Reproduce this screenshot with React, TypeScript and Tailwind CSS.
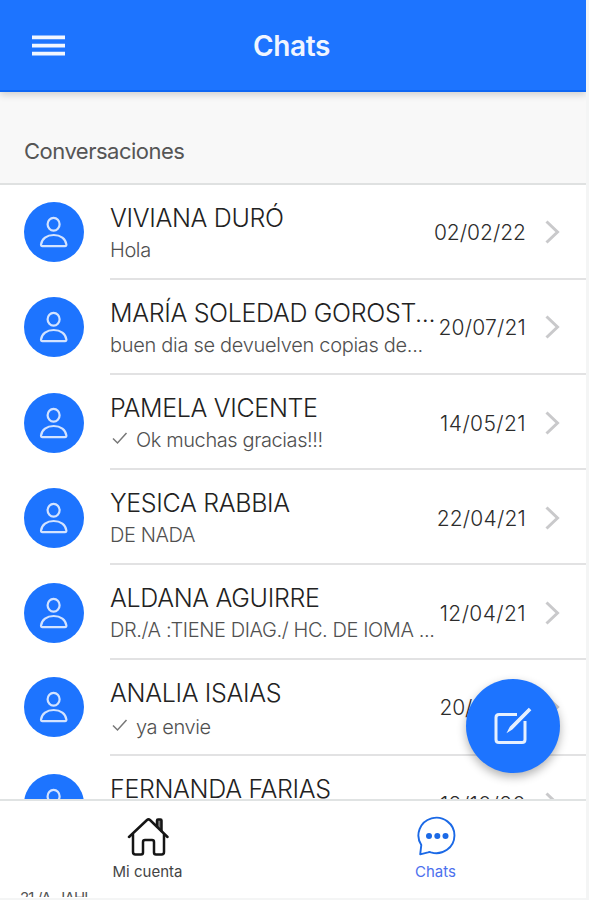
import React from "react";

type Row = { name: string; msg: string; date: string; sent?: boolean; h: string; low?: boolean; msgCls?: string; dateCls?: string };

const rows: Row[] = [
  { name: "VIVIANA DURÓ", msg: "Hola", date: "02/02/22", h: "h-[95px]", dateCls: "tracking-normal" },
  { name: "MARÍA SOLEDAD GOROST...", msg: "buen dia se devuelven copias de...", date: "20/07/21", h: "h-[95px]", msgCls: "tracking-[-0.3px]" },
  { name: "PAMELA VICENTE", msg: "Ok muchas gracias!!!", date: "14/05/21", sent: true, h: "h-[95px]", low: true, dateCls: "tracking-[0.4px]" },
  { name: "YESICA RABBIA", msg: "DE NADA", date: "22/04/21", h: "h-[95px]", low: true },
  { name: "ALDANA AGUIRRE", msg: "DR./A :TIENE DIAG./ HC. DE IOMA ...", date: "12/04/21", h: "h-[95px]", low: true, dateCls: "tracking-[0.4px]" },
  { name: "ANALIA ISAIAS", msg: "ya envie", date: "20/03/21", sent: true, h: "h-[96px]", msgCls: "pt-[2px] tracking-[-0.4px]", dateCls: "tracking-[-0.1px]" },
  { name: "FERNANDA FARIAS", msg: "", date: "12/10/20", h: "h-[95px]", low: true, dateCls: "tracking-[0.4px]" },
];

function Avatar() {
  return (
    <div className="mt-[17px] ml-6 h-[60px] w-[60px] shrink-0 rounded-full bg-[#1d74ff]">
      <svg viewBox="0 0 60 60" className="h-full w-full" fill="none" stroke="#d3e3ff" strokeWidth="2.2">
        <ellipse cx="29.6" cy="22.2" rx="6" ry="6.4" />
        <path d="M17 42.700c.6-6 5.900-9.700 12.700-9.700s12.100 3.700 12.700 9.700q.1 1.400-1.400 1.400H18.400q-1.500 0-1.400-1.400Z" />
      </svg>
    </div>
  );
}

function ChatRow({ row }: { row: Row }) {
  return (
    <div className={"flex shrink-0 " + row.h}>
      <div className={row.low ? "pt-px" : ""}>
        <Avatar />
      </div>
      <div className="ml-[26px] flex min-w-0 flex-1 border-b-2 border-[#e2e2e3]">
        <div className="w-[328px] shrink-0 whitespace-nowrap pt-[18px]">
          <div className="text-[25px] leading-[30px] font-light tracking-[-0.33px] text-[#222]">{row.name}</div>
          <div className={"mt-[4px] flex text-[20px] leading-[26px] font-light text-[#505050] " + (row.msgCls ?? "tracking-[-0.4px]")}>
            {row.sent && (
              <svg viewBox="0 0 26 26" className="h-[26px] w-[26px] shrink-0" fill="none" stroke="#777" strokeWidth="1.5">
                <path d="M3 11.500l4.500 4.500 9-10" />
              </svg>
            )}
            <span>{row.msg}</span>
          </div>
        </div>
        <div className={"-ml-[20px] flex " + (row.low ? "pt-[35px]" : "pt-[34px]")}>
          <div className={"w-[108px] text-right text-[21px] leading-[28px] font-light text-[#2c2c2c] " + (row.dateCls ?? "tracking-[0.2px]")}>{row.date}</div>
          <svg viewBox="0 0 16 26" className="ml-[18px] h-[26px] w-4 shrink-0" fill="none" stroke="#c9c9cb" strokeWidth="3">
            <path d="M2.500 2.500l11 10.500L2.500 23.500" />
          </svg>
        </div>
      </div>
    </div>
  );
}

export default function App() {
  return (
    <div className="h-[900px] w-[589px] overflow-hidden bg-[#f4f5f5] font-['Inter','Roboto',sans-serif]">
      <div className="relative flex h-[898px] w-[586px] flex-col overflow-hidden bg-white">
        <header className="z-10 flex h-[92px] shrink-0 items-center border-b-2 border-[#0d66f4] bg-[#1d74ff] shadow-[0_3px_7px_rgba(0,0,0,0.16)]">
          <svg viewBox="0 0 33 22" className="mt-[2px] ml-8 h-[22px] w-[33px]" fill="#f1f6ff">
            <path d="M0 .6h33v3.700H0zM0 8.800h33v3.700H0zM0 16.800h33v3.700H0z" />
          </svg>
          <h1 className="mt-[2px] ml-[188px] text-[28px] font-semibold tracking-[-0.4px] text-[#f0f5ff]">Chats</h1>
        </header>
        <div className="h-[93px] shrink-0 border-b-2 border-[#dfe1e1] bg-[#f8f8f8] pt-[44px] pl-6 text-[22px] leading-[30px] tracking-[-0.5px] text-[#555]">
          Conversaciones
        </div>
        <main className="flex h-[614px] shrink-0 flex-col overflow-hidden">
          {rows.map((r) => (
            <ChatRow key={r.name} row={r} />
          ))}
        </main>
        <nav className="flex h-[92px] shrink-0 border-t-2 border-[#e0e3e3] text-[15px] leading-5">
          <div className="flex w-[295px] flex-col items-center pt-[15px] text-[#444]">
            <svg viewBox="0 0 42 42" className="h-[42px] w-[42px]" fill="none" stroke="#151515" strokeWidth="2.500" strokeLinejoin="round" strokeLinecap="round">
              <path d="M30 10.500V4.500q0-1 1-1h2.500q1 0 1 1v10.500" fill="#777" />
              <path d="M2 21L20 4q1.500-1.300 3 0l17.500 17" />
              <path d="M6 18.500V36q0 2.500 2.500 2.500h5.500q2 0 2-2V26q0-2 2-2h7q2 0 2 2v10.500q0 2 2 2h5.500q2.500 0 2.500-2.500V18.500" />
            </svg>
            <span className="mt-[4px]">Mi cuenta</span>
          </div>
          <div className="flex w-[281px] flex-col items-center pt-[15px] text-[#4c70ee]">
            <svg viewBox="0 0 42 42" className="ml-[2px] h-[42px] w-[42px]" fill="none" stroke="#1b69e6" strokeWidth="1.900" strokeLinejoin="round">
              <path d="M4.200 38.300L5.300 29A18 17.700 0 1 1 15 36.300q-1.500-.6-3 0Z" />
              <g fill="#1b69e6" stroke="none">
                <circle cx="13" cy="20" r="3" />
                <circle cx="21.300" cy="20" r="3" />
                <circle cx="29.500" cy="20" r="3" />
              </g>
            </svg>
            <span className="mt-[4px]">Chats</span>
          </div>
        </nav>
        <div className="h-[6px] shrink-0 overflow-hidden pl-[20px] text-[15px] leading-[16px] tracking-[-0.8px] whitespace-pre text-[#555]">
          <span className="-mt-px block">21 /A  .IAHI</span>
        </div>
        <button className="absolute top-[679px] left-[466px] h-[94px] w-[94px] rounded-full bg-[#1d74ff] shadow-[0_4px_10px_rgba(0,0,0,0.3)]">
          <svg viewBox="0 0 94 94" className="h-full w-full" fill="none" stroke="#e6f0ff" strokeWidth="3">
            <path d="M51 35.500H33q-3 0-3 3v22q0 3 3 3h23q3 0 3-3V42" />
            <path d="M42 52.500l2.300-4.500L62.800 29.500l1.700 1.700L46 50Z" fill="#e6f0ff" stroke="#e6f0ff" strokeWidth="1.200" />
          </svg>
        </button>
      </div>
    </div>
  );
}
